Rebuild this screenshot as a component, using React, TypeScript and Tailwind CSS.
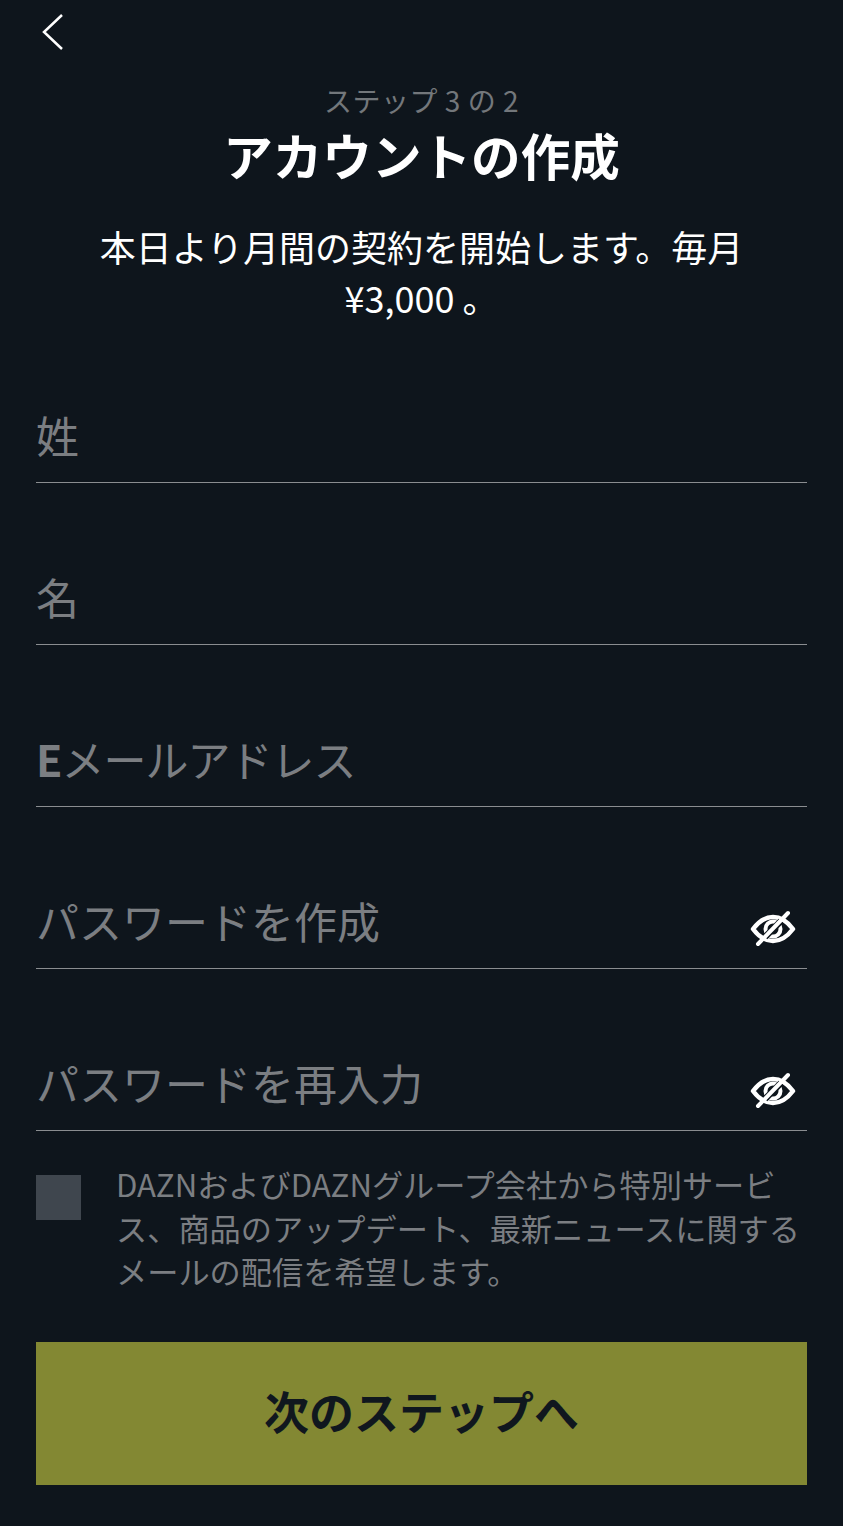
import React from 'react';

const fontStack = { fontFamily: '"Noto Sans CJK JP", sans-serif' };

const EyeOff = () => (
  <svg width="46" height="38" viewBox="0 0 46 38" fill="none" stroke="#ffffff" strokeWidth="4.5" className="block">
    <path d="M3 19 C9 11 15 7 23 7 C31 7 37 11 43 19 C37 27 31 31 23 31 C15 31 9 27 3 19 Z" strokeLinejoin="round" />
    <circle cx="23" cy="19" r="7.500" strokeWidth="4" />
    <path d="M31 11 L15 27" stroke="#0e151c" strokeWidth="6.500" />
    <path d="M38 3 L8 34" strokeWidth="4" strokeLinecap="round" />
  </svg>
);

const Field: React.FC<{ label: React.ReactNode; hasEye?: boolean }> = ({ label, hasEye }) => (
  <div className="h-[162px] flex flex-col justify-end">
    <div className="flex items-end justify-between border-b border-[#8a8d90] h-[80px] pb-[18px]">
      <span className="text-[43px] leading-[60px] text-[#7b7e82]">{label}</span>
      {hasEye && (
        <span className="mr-[11px] mb-[2px]">
          <EyeOff />
        </span>
      )}
    </div>
  </div>
);

export default function App() {
  return (
    <div className="w-[843px] h-[1526px] bg-[#0e151c] overflow-hidden px-[36px]" style={fontStack}>
      <div className="pt-[13px] pl-[5px] h-[83px]">
        <svg width="24" height="38" viewBox="0 0 24 38" fill="none" stroke="#ffffff" strokeWidth="2.5">
          <path d="M21 2 L3 19 L21 36" strokeLinejoin="miter" />
        </svg>
      </div>

      <div className="text-center text-[#73777b] text-[28px] leading-[34px] tracking-[0.5px]">ステップ 3 の 2</div>
      <h1 className="text-center text-white text-[49.600px] leading-[70px] font-bold mt-[2px]">アカウントの作成</h1>
      <p className="text-center text-white text-[36px] leading-[51px] mt-[32px] px-[40px]">
        本日より月間の契約を開始します。毎月 ¥3,000 。
      </p>

      <div className="-mt-[2px]">
        <Field label="姓" />
        <Field label="名" />
        <Field
          label={
            <span className="tracking-[-1px]">
              <span className="font-bold">E</span>メールアドレス
            </span>
          }
        />
        <Field label="パスワードを作成" hasEye />
        <Field label="パスワードを再入力" hasEye />
      </div>

      <div className="flex mt-[31px]">
        <div className="w-[45px] h-[45px] mt-[13px] bg-[#3f464e] shrink-0" />
        <p className="ml-[35px] text-[31.200px] leading-[43.500px] text-[#7b7e82] font-['Liberation_Sans_Narrow','Noto_Sans_CJK_JP',sans-serif]">
          DAZNおよびDAZNグループ会社から特別サービス、商品のアップデート、最新ニュースに関するメールの配信を希望します。
        </p>
      </div>

      <button className="mt-[49px] w-full h-[143px] pb-[4px] bg-[#838833] text-[#10171e] text-[45px] font-bold">
        次のステップへ
      </button>
    </div>
  );
}
